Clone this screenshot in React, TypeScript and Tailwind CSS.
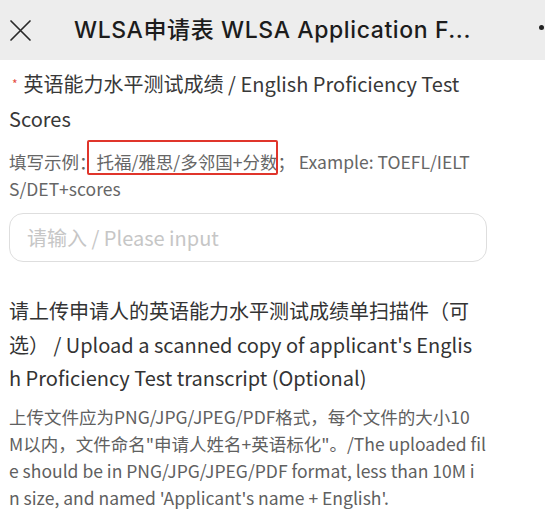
const noteLines = [
  '上传文件应为PNG/JPG/JPEG/PDF格式，每个文件的大小10',
  'M以内，文件命名"申请人姓名+英语标化"。/The uploaded fil',
  'e should be in PNG/JPG/JPEG/PDF format, less than 10M i',
  "n size, and named 'Applicant's name + English'.",
];

export default function App() {
  const font = { fontFamily: '"Noto Sans CJK SC", "Noto Sans", sans-serif' };
  return (
    <div className="w-[545px] h-[516px] bg-white overflow-hidden" style={font}>
      <div className="h-[60px] bg-[#ededed] flex items-center relative">
        <div className="w-[74px] flex items-center pl-[9px]">
          <svg width="23" height="23" viewBox="0 0 23 23" fill="none" stroke="#2a2a2a" strokeWidth="1.7" strokeLinecap="round">
            <path d="M2 2 L21 21 M21 2 L2 21" />
          </svg>
        </div>
        <div
          className="text-[23px] font-medium text-[#1c1c1c] whitespace-nowrap leading-none tracking-[0.6px]"
          style={{ fontFamily: 'Inter, "Noto Sans CJK SC", sans-serif' }}
        >
          WLSA申请表 WLSA Application F...
        </div>
        <div className="absolute right-[1px] top-[25px] w-[5px] h-[5px] rounded-full bg-[#222]" />
      </div>
      <div className="ml-[9px] w-[472px]">
        <div className="mt-[6px] text-[20px] leading-[35px] text-[#383838]">
          <span className="text-[#e54d42] text-[12px] align-top ml-[3px] mr-[6px]">*</span>
          英语能力水平测试成绩 / English Proficiency Test Scores
        </div>
        <div className="mt-[12px] text-[17.5px] leading-[27px] text-[#666] break-all">
          填写示例：<span className="relative">托福/雅思/多邻国+分数<span className="absolute left-[-10px] right-[-1px] top-[-9px] bottom-[-1px] border-2 border-[#e0352b] rounded-[2px]" /></span>； Example: TOEFL/IELTS/DET+scores
        </div>
        <div className="mt-[11px] w-[478px] h-[49px] border border-[#dedede] rounded-[14px] flex items-center px-[17px] text-[20px] text-[#c6c6c6]">
          请输入 / Please input
        </div>
        <div className="mt-[32px] text-[20px] leading-[33.5px] text-[#333] break-all">
          请上传申请人的英语能力水平测试成绩单扫描件（可选） / Upload a scanned copy of applicant's English Proficiency Test transcript (Optional)
        </div>
        <div className="mt-[8px] flex flex-col text-[17.5px] leading-[27px] text-[#606060]">
          {noteLines.map((line) => (
            <div key={line} className="whitespace-nowrap">{line}</div>
          ))}
        </div>
      </div>
    </div>
  );
}
